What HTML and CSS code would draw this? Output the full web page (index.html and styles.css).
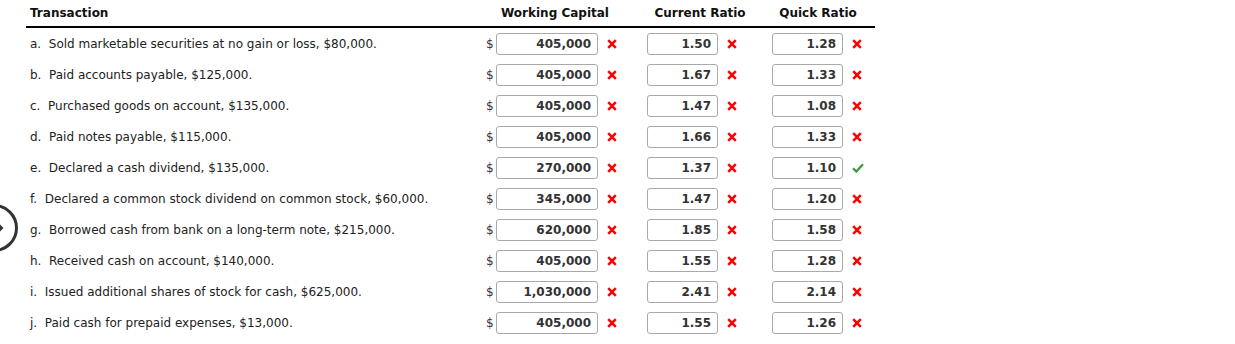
FILE: index.html
```html
<!DOCTYPE html>
<html>
<head>
<meta charset="utf-8">
<link rel="stylesheet" href="styles.css">
</head>
<body>
<div class="nav-circle"><svg width="30" height="60" viewBox="0 0 30 60"><circle cx="-6" cy="30" r="22.5" fill="none" stroke="#333" stroke-width="3"/><path d="M0 26.5 L3.5 30 L0 33.5 Z" fill="#333"/></svg></div>
<div class="table">
  <div class="head">
    <div class="h h-trans">Transaction</div>
    <div class="h h-wc">Working Capital</div>
    <div class="h h-cr">Current Ratio</div>
    <div class="h h-qr">Quick Ratio</div>
  </div>
  <div class="row"><div class="trans">a.&nbsp; Sold marketable securities at no gain or loss, $80,000.</div><div class="wc"><span class="dollar">$</span><span class="box box-wc">405,000</span><svg class="mark" viewBox="0 0 10 10"><path d="M1.2 1.2 L8.8 8.8 M8.8 1.2 L1.2 8.8"/></svg></div><div class="cr"><span class="box box-r">1.50</span><svg class="mark" viewBox="0 0 10 10"><path d="M1.2 1.2 L8.8 8.8 M8.8 1.2 L1.2 8.8"/></svg></div><div class="qr"><span class="box box-r">1.28</span><svg class="mark" viewBox="0 0 10 10"><path d="M1.2 1.2 L8.8 8.8 M8.8 1.2 L1.2 8.8"/></svg></div></div>
  <div class="row"><div class="trans">b.&nbsp; Paid accounts payable, $125,000.</div><div class="wc"><span class="dollar">$</span><span class="box box-wc">405,000</span><svg class="mark" viewBox="0 0 10 10"><path d="M1.2 1.2 L8.8 8.8 M8.8 1.2 L1.2 8.8"/></svg></div><div class="cr"><span class="box box-r">1.67</span><svg class="mark" viewBox="0 0 10 10"><path d="M1.2 1.2 L8.8 8.8 M8.8 1.2 L1.2 8.8"/></svg></div><div class="qr"><span class="box box-r">1.33</span><svg class="mark" viewBox="0 0 10 10"><path d="M1.2 1.2 L8.8 8.8 M8.8 1.2 L1.2 8.8"/></svg></div></div>
  <div class="row"><div class="trans">c.&nbsp; Purchased goods on account, $135,000.</div><div class="wc"><span class="dollar">$</span><span class="box box-wc">405,000</span><svg class="mark" viewBox="0 0 10 10"><path d="M1.2 1.2 L8.8 8.8 M8.8 1.2 L1.2 8.8"/></svg></div><div class="cr"><span class="box box-r">1.47</span><svg class="mark" viewBox="0 0 10 10"><path d="M1.2 1.2 L8.8 8.8 M8.8 1.2 L1.2 8.8"/></svg></div><div class="qr"><span class="box box-r">1.08</span><svg class="mark" viewBox="0 0 10 10"><path d="M1.2 1.2 L8.8 8.8 M8.8 1.2 L1.2 8.8"/></svg></div></div>
  <div class="row"><div class="trans">d.&nbsp; Paid notes payable, $115,000.</div><div class="wc"><span class="dollar">$</span><span class="box box-wc">405,000</span><svg class="mark" viewBox="0 0 10 10"><path d="M1.2 1.2 L8.8 8.8 M8.8 1.2 L1.2 8.8"/></svg></div><div class="cr"><span class="box box-r">1.66</span><svg class="mark" viewBox="0 0 10 10"><path d="M1.2 1.2 L8.8 8.8 M8.8 1.2 L1.2 8.8"/></svg></div><div class="qr"><span class="box box-r">1.33</span><svg class="mark" viewBox="0 0 10 10"><path d="M1.2 1.2 L8.8 8.8 M8.8 1.2 L1.2 8.8"/></svg></div></div>
  <div class="row"><div class="trans">e.&nbsp; Declared a cash dividend, $135,000.</div><div class="wc"><span class="dollar">$</span><span class="box box-wc">270,000</span><svg class="mark" viewBox="0 0 10 10"><path d="M1.2 1.2 L8.8 8.8 M8.8 1.2 L1.2 8.8"/></svg></div><div class="cr"><span class="box box-r">1.37</span><svg class="mark" viewBox="0 0 10 10"><path d="M1.2 1.2 L8.8 8.8 M8.8 1.2 L1.2 8.8"/></svg></div><div class="qr"><span class="box box-r">1.10</span><svg class="mark check" viewBox="0 0 12 10"><path d="M1 5.2 L4.3 8.6 L11 1.2"/></svg></div></div>
  <div class="row"><div class="trans">f.&nbsp; Declared a common stock dividend on common stock, $60,000.</div><div class="wc"><span class="dollar">$</span><span class="box box-wc">345,000</span><svg class="mark" viewBox="0 0 10 10"><path d="M1.2 1.2 L8.8 8.8 M8.8 1.2 L1.2 8.8"/></svg></div><div class="cr"><span class="box box-r">1.47</span><svg class="mark" viewBox="0 0 10 10"><path d="M1.2 1.2 L8.8 8.8 M8.8 1.2 L1.2 8.8"/></svg></div><div class="qr"><span class="box box-r">1.20</span><svg class="mark" viewBox="0 0 10 10"><path d="M1.2 1.2 L8.8 8.8 M8.8 1.2 L1.2 8.8"/></svg></div></div>
  <div class="row"><div class="trans">g.&nbsp; Borrowed cash from bank on a long-term note, $215,000.</div><div class="wc"><span class="dollar">$</span><span class="box box-wc">620,000</span><svg class="mark" viewBox="0 0 10 10"><path d="M1.2 1.2 L8.8 8.8 M8.8 1.2 L1.2 8.8"/></svg></div><div class="cr"><span class="box box-r">1.85</span><svg class="mark" viewBox="0 0 10 10"><path d="M1.2 1.2 L8.8 8.8 M8.8 1.2 L1.2 8.8"/></svg></div><div class="qr"><span class="box box-r">1.58</span><svg class="mark" viewBox="0 0 10 10"><path d="M1.2 1.2 L8.8 8.8 M8.8 1.2 L1.2 8.8"/></svg></div></div>
  <div class="row"><div class="trans">h.&nbsp; Received cash on account, $140,000.</div><div class="wc"><span class="dollar">$</span><span class="box box-wc">405,000</span><svg class="mark" viewBox="0 0 10 10"><path d="M1.2 1.2 L8.8 8.8 M8.8 1.2 L1.2 8.8"/></svg></div><div class="cr"><span class="box box-r">1.55</span><svg class="mark" viewBox="0 0 10 10"><path d="M1.2 1.2 L8.8 8.8 M8.8 1.2 L1.2 8.8"/></svg></div><div class="qr"><span class="box box-r">1.28</span><svg class="mark" viewBox="0 0 10 10"><path d="M1.2 1.2 L8.8 8.8 M8.8 1.2 L1.2 8.8"/></svg></div></div>
  <div class="row"><div class="trans">i.&nbsp; Issued additional shares of stock for cash, $625,000.</div><div class="wc"><span class="dollar">$</span><span class="box box-wc">1,030,000</span><svg class="mark" viewBox="0 0 10 10"><path d="M1.2 1.2 L8.8 8.8 M8.8 1.2 L1.2 8.8"/></svg></div><div class="cr"><span class="box box-r">2.41</span><svg class="mark" viewBox="0 0 10 10"><path d="M1.2 1.2 L8.8 8.8 M8.8 1.2 L1.2 8.8"/></svg></div><div class="qr"><span class="box box-r">2.14</span><svg class="mark" viewBox="0 0 10 10"><path d="M1.2 1.2 L8.8 8.8 M8.8 1.2 L1.2 8.8"/></svg></div></div>
  <div class="row"><div class="trans">j.&nbsp; Paid cash for prepaid expenses, $13,000.</div><div class="wc"><span class="dollar">$</span><span class="box box-wc">405,000</span><svg class="mark" viewBox="0 0 10 10"><path d="M1.2 1.2 L8.8 8.8 M8.8 1.2 L1.2 8.8"/></svg></div><div class="cr"><span class="box box-r">1.55</span><svg class="mark" viewBox="0 0 10 10"><path d="M1.2 1.2 L8.8 8.8 M8.8 1.2 L1.2 8.8"/></svg></div><div class="qr"><span class="box box-r">1.26</span><svg class="mark" viewBox="0 0 10 10"><path d="M1.2 1.2 L8.8 8.8 M8.8 1.2 L1.2 8.8"/></svg></div></div>
</div>
</body>
</html>
```

FILE: styles.css
```css
html, body {
  margin: 0;
  padding: 0;
  background: #fff;
}
body {
  font-family: "DejaVu Sans", Verdana, sans-serif;
  font-size: 12px;
  color: #222;
  position: relative;
  width: 1235px;
  height: 344px;
  overflow: hidden;
}
.nav-circle {
  position: absolute;
  left: 0;
  top: 198px;
  width: 30px;
  height: 60px;
}
.nav-circle svg { display: block; }
.table {
  margin-left: 26px;
  width: 849px;
}
.head {
  display: grid;
  grid-template-columns: 456px 146px 144px 92px;
  height: 26px;
  border-bottom: 2px solid #000;
  align-items: center;
  font-weight: bold;
  color: #111;
}
.h-trans { padding-left: 4px; }
.h-wc, .h-cr, .h-qr { text-align: center; }
.row {
  display: flex;
  align-items: center;
  height: 31px;
}
.trans {
  width: 452px;
  padding-left: 4px;
  white-space: nowrap;
}
.wc, .cr, .qr {
  display: flex;
  align-items: center;
}
.wc { width: 158px; padding-left: 5px; box-sizing: border-box; }
.cr { width: 120px; padding-left: 7px; box-sizing: border-box; }
.qr { width: 115px; padding-left: 12px; box-sizing: border-box; }
.dollar {
  width: 9px;
  margin-left: -1px;
  margin-right: 1px;
  color: #334;
  font-size: 12px;
}
.box {
  box-sizing: border-box;
  height: 22px;
  border: 1px solid #a9a9a9;
  border-radius: 3px;
  text-align: right;
  padding-right: 6px;
  font-weight: bold;
  font-size: 12px;
  line-height: 20px;
  color: #333;
  background: #fff;
}
.box-wc { width: 102px; }
.box-r { width: 71px; }
.mark {
  width: 10px;
  height: 10px;
  margin-left: 9px;
  fill: none;
  stroke: #f00;
  stroke-width: 2.5;
}
.mark.check {
  width: 12px;
  margin-left: 9px;
  stroke: #3a9a3a;
  stroke-width: 2.2;
}
```
